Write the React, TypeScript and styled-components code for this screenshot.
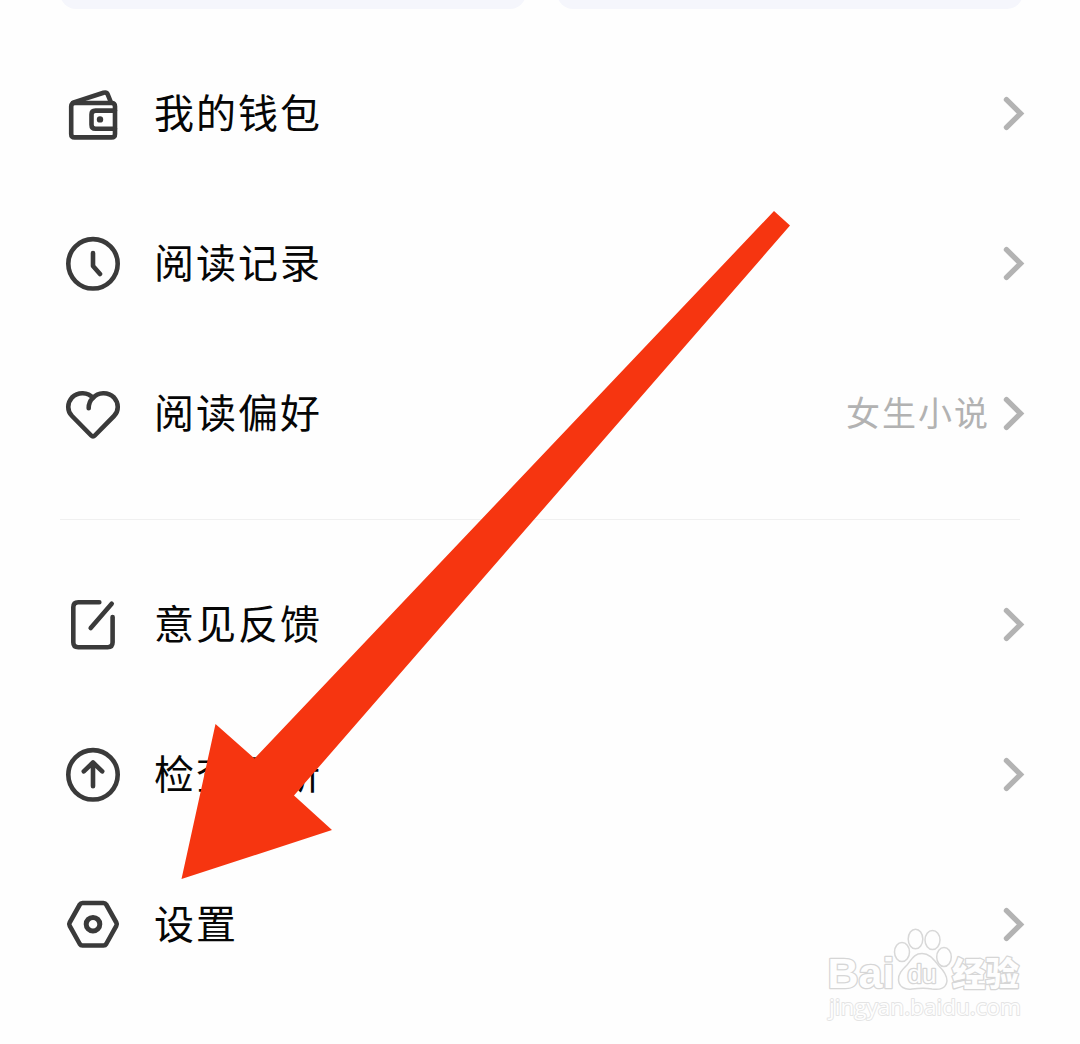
import React from "react";
import styled, { createGlobalStyle } from "styled-components";

const GlobalStyle = createGlobalStyle`
  * { box-sizing: border-box; }
  body {
    margin: 0;
    background: #fefefe;
    font-family: "Noto Sans CJK SC", "Noto Sans", sans-serif;
  }
`;

const Page = styled.main`
  position: relative;
  width: 1080px;
  height: 1044px;
  overflow: hidden;
  background: #fefefe;
`;

const CardStrip = styled.div`
  display: flex;
  align-items: flex-end;
  gap: 31px;
  height: 9px;
  padding: 0 57px 0 60px;
  overflow: hidden;
`;

const Card = styled.div`
  flex: 1;
  height: 60px;
  border-radius: 16px;
  background: #f5f6fc;
`;

const Menu = styled.nav`
  display: flex;
  flex-direction: column;
  padding-top: 30px;
`;

const Row = styled.div`
  display: flex;
  align-items: center;
  height: 150px;
  padding: 0 50px 0 63px;
`;

const IconBox = styled.svg`
  width: 60px;
  height: 60px;
  flex: none;
  fill: none;
  stroke: #3a3a3a;
  stroke-width: 4.6;
  stroke-linecap: round;
  stroke-linejoin: round;
`;

const Label = styled.span`
  flex: 1;
  padding: 0 0 7px 31px;
  font-size: 40px;
  line-height: 60px;
  letter-spacing: 2px;
  color: #060606;
  white-space: nowrap;
`;

const Value = styled.span`
  margin-right: 10px;
  padding-bottom: 5px;
  font-size: 34px;
  line-height: 50px;
  letter-spacing: 2px;
  color: #b2b2b2;
`;

const Chevron = styled.svg`
  width: 30px;
  height: 40px;
  flex: none;
  fill: none;
  stroke: #b3b3b3;
  stroke-width: 5.4;
  stroke-linecap: round;
`;

const Divider = styled.hr`
  width: 960px;
  height: 1px;
  margin: 30px 60px;
  border: 0;
  background: #f0f0f0;
`;

const Pointer = styled.svg`
  position: absolute;
  inset: 0;
  width: 1080px;
  height: 1044px;
  fill: #f63510;
`;

const Watermark = styled.svg`
  position: absolute;
  left: 820px;
  top: 920px;
  width: 210px;
  height: 105px;
  fill: #fefefe;
  stroke: #d8d8d8;
  stroke-width: 1.5;
  stroke-linejoin: round;
  overflow: visible;
`;

const WatermarkText = styled.text<{ $size: number; $weight: number; $soft?: boolean }>`
  font-family: "Liberation Sans", "Noto Sans CJK SC", sans-serif;
  font-size: ${(p) => p.$size}px;
  font-weight: ${(p) => p.$weight};
  stroke: ${(p) => (p.$soft ? "#e4e4e4" : "#d6d6d6")};
  stroke-width: ${(p) => (p.$soft ? 1.8 : 2.6)};
  paint-order: stroke;
`;

const WatermarkUrl = styled(WatermarkText)`
  font-family: "Open Sans", "Noto Sans", sans-serif;
`;

const icons = {
  wallet: (
    <>
      <path d="M12 19H48.5Q52 19 52 22.5V49.9Q52 53.4 48.5 53.4H11.7Q8.2 53.4 8.2 49.9V22.5Q8.2 19 12 19Z" />
      <path d="M10 18.600L40.5 8.800Q43.6 7.800 44.7 10.400L48 18.500" />
      <path d="M52 26.6H32.5Q28.5 26.6 28.5 30.6V40.8Q28.5 44.8 32.5 44.8H52" />
      <circle cx="37" cy="35.4" r="3.2" fill="#3a3a3a" stroke="none" />
    </>
  ),
  clock: (
    <>
      <circle cx="30" cy="29.8" r="24.7" />
      <path d="M30 19V32L37 40" />
    </>
  ),
  heart: (
    <path d="M25.7 24.3C25.7 19.5 27 16.5 30 14C35 8 45 7.5 51 13.5C56 19 56 27 51 32L31.8 51.5Q30 53.4 28.2 51.5L9 32C4 27 4 19 9 13.5C15 7.5 25 8 30 14" />
  ),
  edit: (
    <>
      <path d="M36.3 7.3H15.3Q10.3 7.3 10.3 12.3V47.2Q10.3 52.2 15.3 52.2H44.6Q49.6 52.2 49.6 47.2V22" />
      <path d="M48.7 8.7L27.7 33" />
    </>
  ),
  update: (
    <>
      <circle cx="30" cy="29.8" r="24.7" />
      <path d="M30 41.3V17.5M20.8 26.3L30 17.5L39.2 26.3" />
    </>
  ),
  settings: (
    <>
      <path d="M19.5 8H40.5Q42.3 8 43.2 9.5L53.3 27.5Q54.3 29.2 53.3 30.9L43.2 49Q42.3 50.5 40.5 50.5H19.5Q17.7 50.5 16.8 49L6.7 30.9Q5.7 29.2 6.7 27.5L16.8 9.5Q17.7 8 19.5 8Z" />
      <circle cx="30" cy="29.2" r="6.8" strokeWidth="5" />
    </>
  ),
};

type MenuItemProps = { icon: keyof typeof icons; label: string; value?: string };

const MenuItem = ({ icon, label, value }: MenuItemProps) => (
  <Row>
    <IconBox viewBox="0 0 60 60">{icons[icon]}</IconBox>
    <Label>{label}</Label>
    {value && <Value>{value}</Value>}
    <Chevron viewBox="0 0 30 40">
      <path d="M6.5 5.7L20.5 19.5L6.5 33.3" />
    </Chevron>
  </Row>
);

export default function App() {
  return (
    <>
      <GlobalStyle />
      <Page>
        <CardStrip>
          <Card />
          <Card />
        </CardStrip>
        <Menu>
          <MenuItem icon="wallet" label="我的钱包" />
          <MenuItem icon="clock" label="阅读记录" />
          <MenuItem icon="heart" label="阅读偏好" value="女生小说" />
          <Divider />
          <MenuItem icon="edit" label="意见反馈" />
          <MenuItem icon="update" label="检查更新" />
          <MenuItem icon="settings" label="设置" />
        </Menu>
        <Pointer viewBox="0 0 1080 1044">
          <path d="M774 211L790 225.5L294 795.5L332 830L181.5 879L215.5 724L254.5 758.5Z" />
        </Pointer>
        <Watermark viewBox="0 0 210 105">
          <WatermarkText x="7.5" y="68.3" $size={43} $weight={700} textLength="67" lengthAdjust="spacingAndGlyphs">Bai</WatermarkText>
          <ellipse cx="82" cy="32" rx="7.5" ry="9.5" />
          <ellipse cx="95.5" cy="19" rx="7.3" ry="9.8" />
          <ellipse cx="112.5" cy="20" rx="7.5" ry="9.5" />
          <ellipse cx="124" cy="37" rx="7.3" ry="9.5" />
          <path d="M102 33.5C110 33.5 114 40 119 46C124 51 127 55 127 61C126 69 119 70 112 69C105 67.5 99 68 92 69C85 70 79 67 78.5 60C78 54 82 50 87 45C92 39 94 33.5 102 33.5Z" />
          <WatermarkText x="87.5" y="63" $size={25} $weight={400} textLength="29" lengthAdjust="spacingAndGlyphs">du</WatermarkText>
          <WatermarkText x="132" y="66" $size={33.5} $weight={900} textLength="67" lengthAdjust="spacingAndGlyphs">经验</WatermarkText>
          <WatermarkUrl x="9" y="94.5" $size={22} $weight={500} $soft textLength="192" lengthAdjust="spacingAndGlyphs">jingyan.baidu.com</WatermarkUrl>
        </Watermark>
      </Page>
    </>
  );
}
